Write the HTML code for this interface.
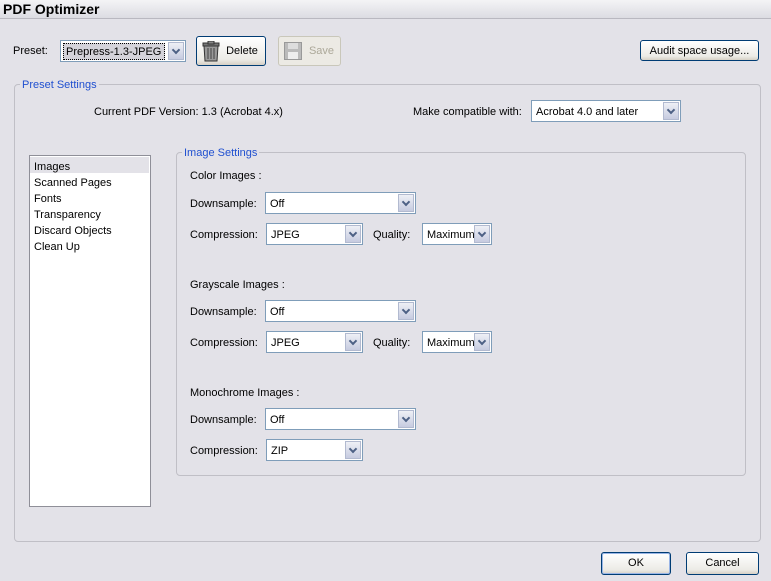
<!DOCTYPE html>
<html><head><style>
*{margin:0;padding:0;box-sizing:border-box}
body{width:771px;height:581px;background:#e3e2e8;font-family:"Liberation Sans",sans-serif;font-size:11px;color:#000;position:relative;overflow:hidden}
.a{position:absolute;white-space:nowrap;padding-top:1px}
.sel{position:absolute;background:#fff;border:1px solid #7f9db9;height:22px}
.sel span{position:absolute;left:4px;top:5px;font-size:11px}
.sel i{position:absolute;right:1px;top:1px;bottom:1px;width:16px;background:linear-gradient(#eef0f6,#c6cbe0);border:1px solid #b2bad0}
.sel i:after{content:"";position:absolute;left:4px;top:4px;width:4px;height:4px;border-right:2px solid #4d6185;border-bottom:2px solid #4d6185;transform:rotate(45deg)}
.btn{position:absolute;border:1px solid #003c74;border-radius:3px;background:linear-gradient(#fff,#ecebe6 80%,#d6d0c5);text-align:center;font-size:11px;line-height:21px}
.grp{position:absolute;border:1px solid #c0bfc6;border-radius:4px}
.lg{position:absolute;background:#e3e2e8;color:#2050d0;padding:1px 2px 0;font-size:11px}
</style></head><body>
<div class="a" style="left:0;top:0;width:771px;height:19px;background:linear-gradient(#f4f4f6,#dcdce2);border-bottom:1px solid #b9b8c0"></div>
<div class="a" style="left:3px;top:0px;font-size:14px;font-weight:bold">PDF Optimizer</div>

<div class="a" style="left:13px;top:44px">Preset:</div>
<div class="sel" style="left:60px;top:40px;width:126px"><span style="left:2px;top:2px;background:#d4d3da;border:1px dotted #000;padding:2px 2px 1px;width:102px">Prepress-1.3-JPEG</span><i></i></div>

<div class="btn" style="left:196px;top:36px;width:70px;height:30px;line-height:29px;padding-left:22px">Delete
<svg style="position:absolute;left:5px;top:4px" width="18" height="21" viewBox="0 0 18 21"><rect x="1" y="2" width="16" height="3" fill="#777" stroke="#333"/><rect x="6" y="0" width="6" height="3" fill="#888" stroke="#333"/><path d="M2 5h14l-1 15H3z" fill="#999" stroke="#333"/><path d="M6 7v11M9 7v11M12 7v11" stroke="#444"/></svg></div>
<div class="btn" style="left:278px;top:36px;width:63px;height:30px;line-height:29px;padding-left:24px;border-color:#c9c7ba;color:#aca899;background:#eceae4">Save
<svg style="position:absolute;left:5px;top:5px" width="18" height="18" viewBox="0 0 18 18"><rect x="0.5" y="0.5" width="17" height="17" fill="#bbb" stroke="#999"/><rect x="4" y="1" width="10" height="6" fill="#ddd"/><rect x="4" y="10" width="10" height="7" fill="#eee"/></svg></div>

<div class="btn" style="left:640px;top:40px;width:119px;height:21px;line-height:20px">Audit space usage...</div>

<div class="grp" style="left:14px;top:84px;width:747px;height:458px"></div>
<div class="lg" style="left:20px;top:78px">Preset Settings</div>
<div class="a" style="left:94px;top:105px">Current PDF Version: 1.3 (Acrobat 4.x)</div>
<div class="a" style="left:413px;top:105px">Make compatible with:</div>
<div class="sel" style="left:531px;top:100px;width:150px"><span>Acrobat 4.0 and later</span><i></i></div>

<div class="a" style="left:29px;top:155px;width:122px;height:352px;background:#fff;border:1px solid #8f8f98"></div>
<div class="a" style="left:30px;top:157px;width:119px;height:16px;background:#e3e2e8"></div>
<div class="a" style="left:34px;top:158px;line-height:16px">Images<br>Scanned Pages<br>Fonts<br>Transparency<br>Discard Objects<br>Clean Up</div>

<div class="grp" style="left:176px;top:152px;width:570px;height:324px"></div>
<div class="lg" style="left:182px;top:146px">Image Settings</div>

<div class="a" style="left:190px;top:169px">Color Images :</div>
<div class="a" style="left:190px;top:197px">Downsample:</div>
<div class="sel" style="left:265px;top:192px;width:151px"><span>Off</span><i></i></div>
<div class="a" style="left:190px;top:228px">Compression:</div>
<div class="sel" style="left:266px;top:223px;width:97px"><span>JPEG</span><i></i></div>
<div class="a" style="left:373px;top:228px">Quality:</div>
<div class="sel" style="left:422px;top:223px;width:70px"><span>Maximum</span><i></i></div>

<div class="a" style="left:190px;top:278px">Grayscale Images :</div>
<div class="a" style="left:190px;top:305px">Downsample:</div>
<div class="sel" style="left:265px;top:300px;width:151px"><span>Off</span><i></i></div>
<div class="a" style="left:190px;top:336px">Compression:</div>
<div class="sel" style="left:266px;top:331px;width:97px"><span>JPEG</span><i></i></div>
<div class="a" style="left:373px;top:336px">Quality:</div>
<div class="sel" style="left:422px;top:331px;width:70px"><span>Maximum</span><i></i></div>

<div class="a" style="left:190px;top:386px">Monochrome Images :</div>
<div class="a" style="left:190px;top:413px">Downsample:</div>
<div class="sel" style="left:265px;top:408px;width:151px"><span>Off</span><i></i></div>
<div class="a" style="left:190px;top:444px">Compression:</div>
<div class="sel" style="left:266px;top:439px;width:97px"><span>ZIP</span><i></i></div>

<div class="btn" style="left:601px;top:552px;width:70px;height:23px;border-color:#003c74;box-shadow:inset 0 0 0 1px #99b5e6">OK</div>
<div class="btn" style="left:686px;top:552px;width:73px;height:23px">Cancel</div>
</body></html>
